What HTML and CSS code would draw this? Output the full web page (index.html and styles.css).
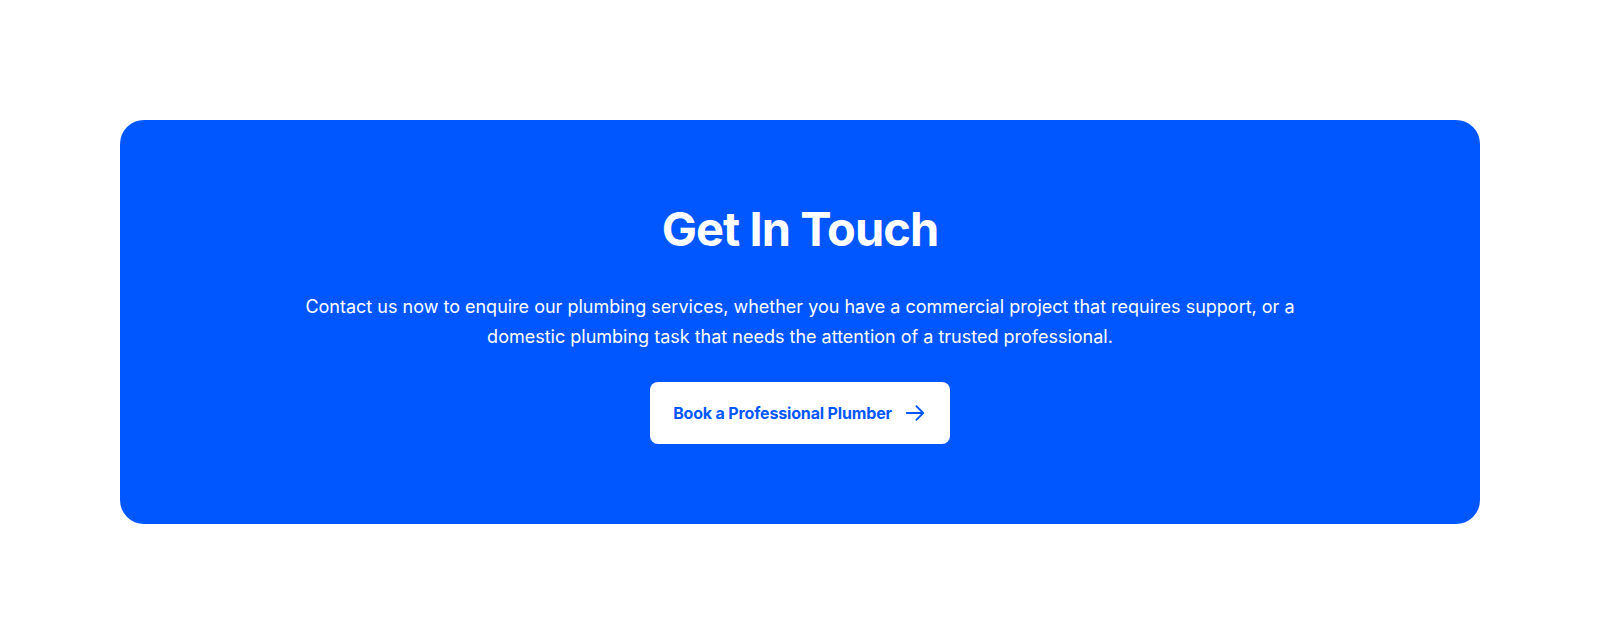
FILE: index.html
```html
<!DOCTYPE html>
<html lang="en">
<head>
<meta charset="utf-8">
<title>Get In Touch</title>
<link rel="stylesheet" href="styles.css">
</head>
<body>
<section class="cta">
  <h2 class="cta-title">Get In Touch</h2>
  <p class="cta-text">Contact us now to enquire our plumbing services, whether you have a commercial project that requires support, or a domestic plumbing task that needs the attention of a trusted professional.</p>
  <a class="cta-button" href="#">
    <span>Book a Professional Plumber</span>
    <svg class="cta-arrow" viewBox="0 0 24 24" fill="none" stroke="currentColor" stroke-width="2" stroke-linecap="round" stroke-linejoin="round" aria-hidden="true">
      <path d="M13.5 4.5 21 12m0 0-7.5 7.5M21 12H3"/>
    </svg>
  </a>
</section>
</body>
</html>
```
FILE: styles.css
```css
* { box-sizing: border-box; }
html, body { margin: 0; padding: 0; background: #ffffff; }
body {
  font-family: Inter, "Noto Sans", sans-serif;
  padding: 120px 120px;
}
.cta {
  background: #0057ff;
  border-radius: 24px;
  padding: 80px 40px 80px;
  display: flex;
  flex-direction: column;
  align-items: center;
  text-align: center;
  color: #ffffff;
}
.cta-title {
  margin: 0;
  font-size: 47px;
  line-height: 58px;
  font-weight: 700;
  letter-spacing: -0.02em;
}
.cta-title + .cta-text { margin-top: 34px; }
.cta-text {
  margin: 0;
  max-width: 1000px;
  font-size: 18px;
  line-height: 30px;
  font-weight: 400;
}
.cta-button {
  margin-top: 30px;
  display: inline-flex;
  align-items: center;
  gap: 12px;
  height: 62px;
  padding: 0 24px 0 23px;
  background: #ffffff;
  color: #0057ff;
  border-radius: 8px;
  text-decoration: none;
  font-size: 16px;
  font-weight: 700;
  letter-spacing: -0.01em;
}
.cta-arrow { width: 22px; height: 22px; display: block; }
```
